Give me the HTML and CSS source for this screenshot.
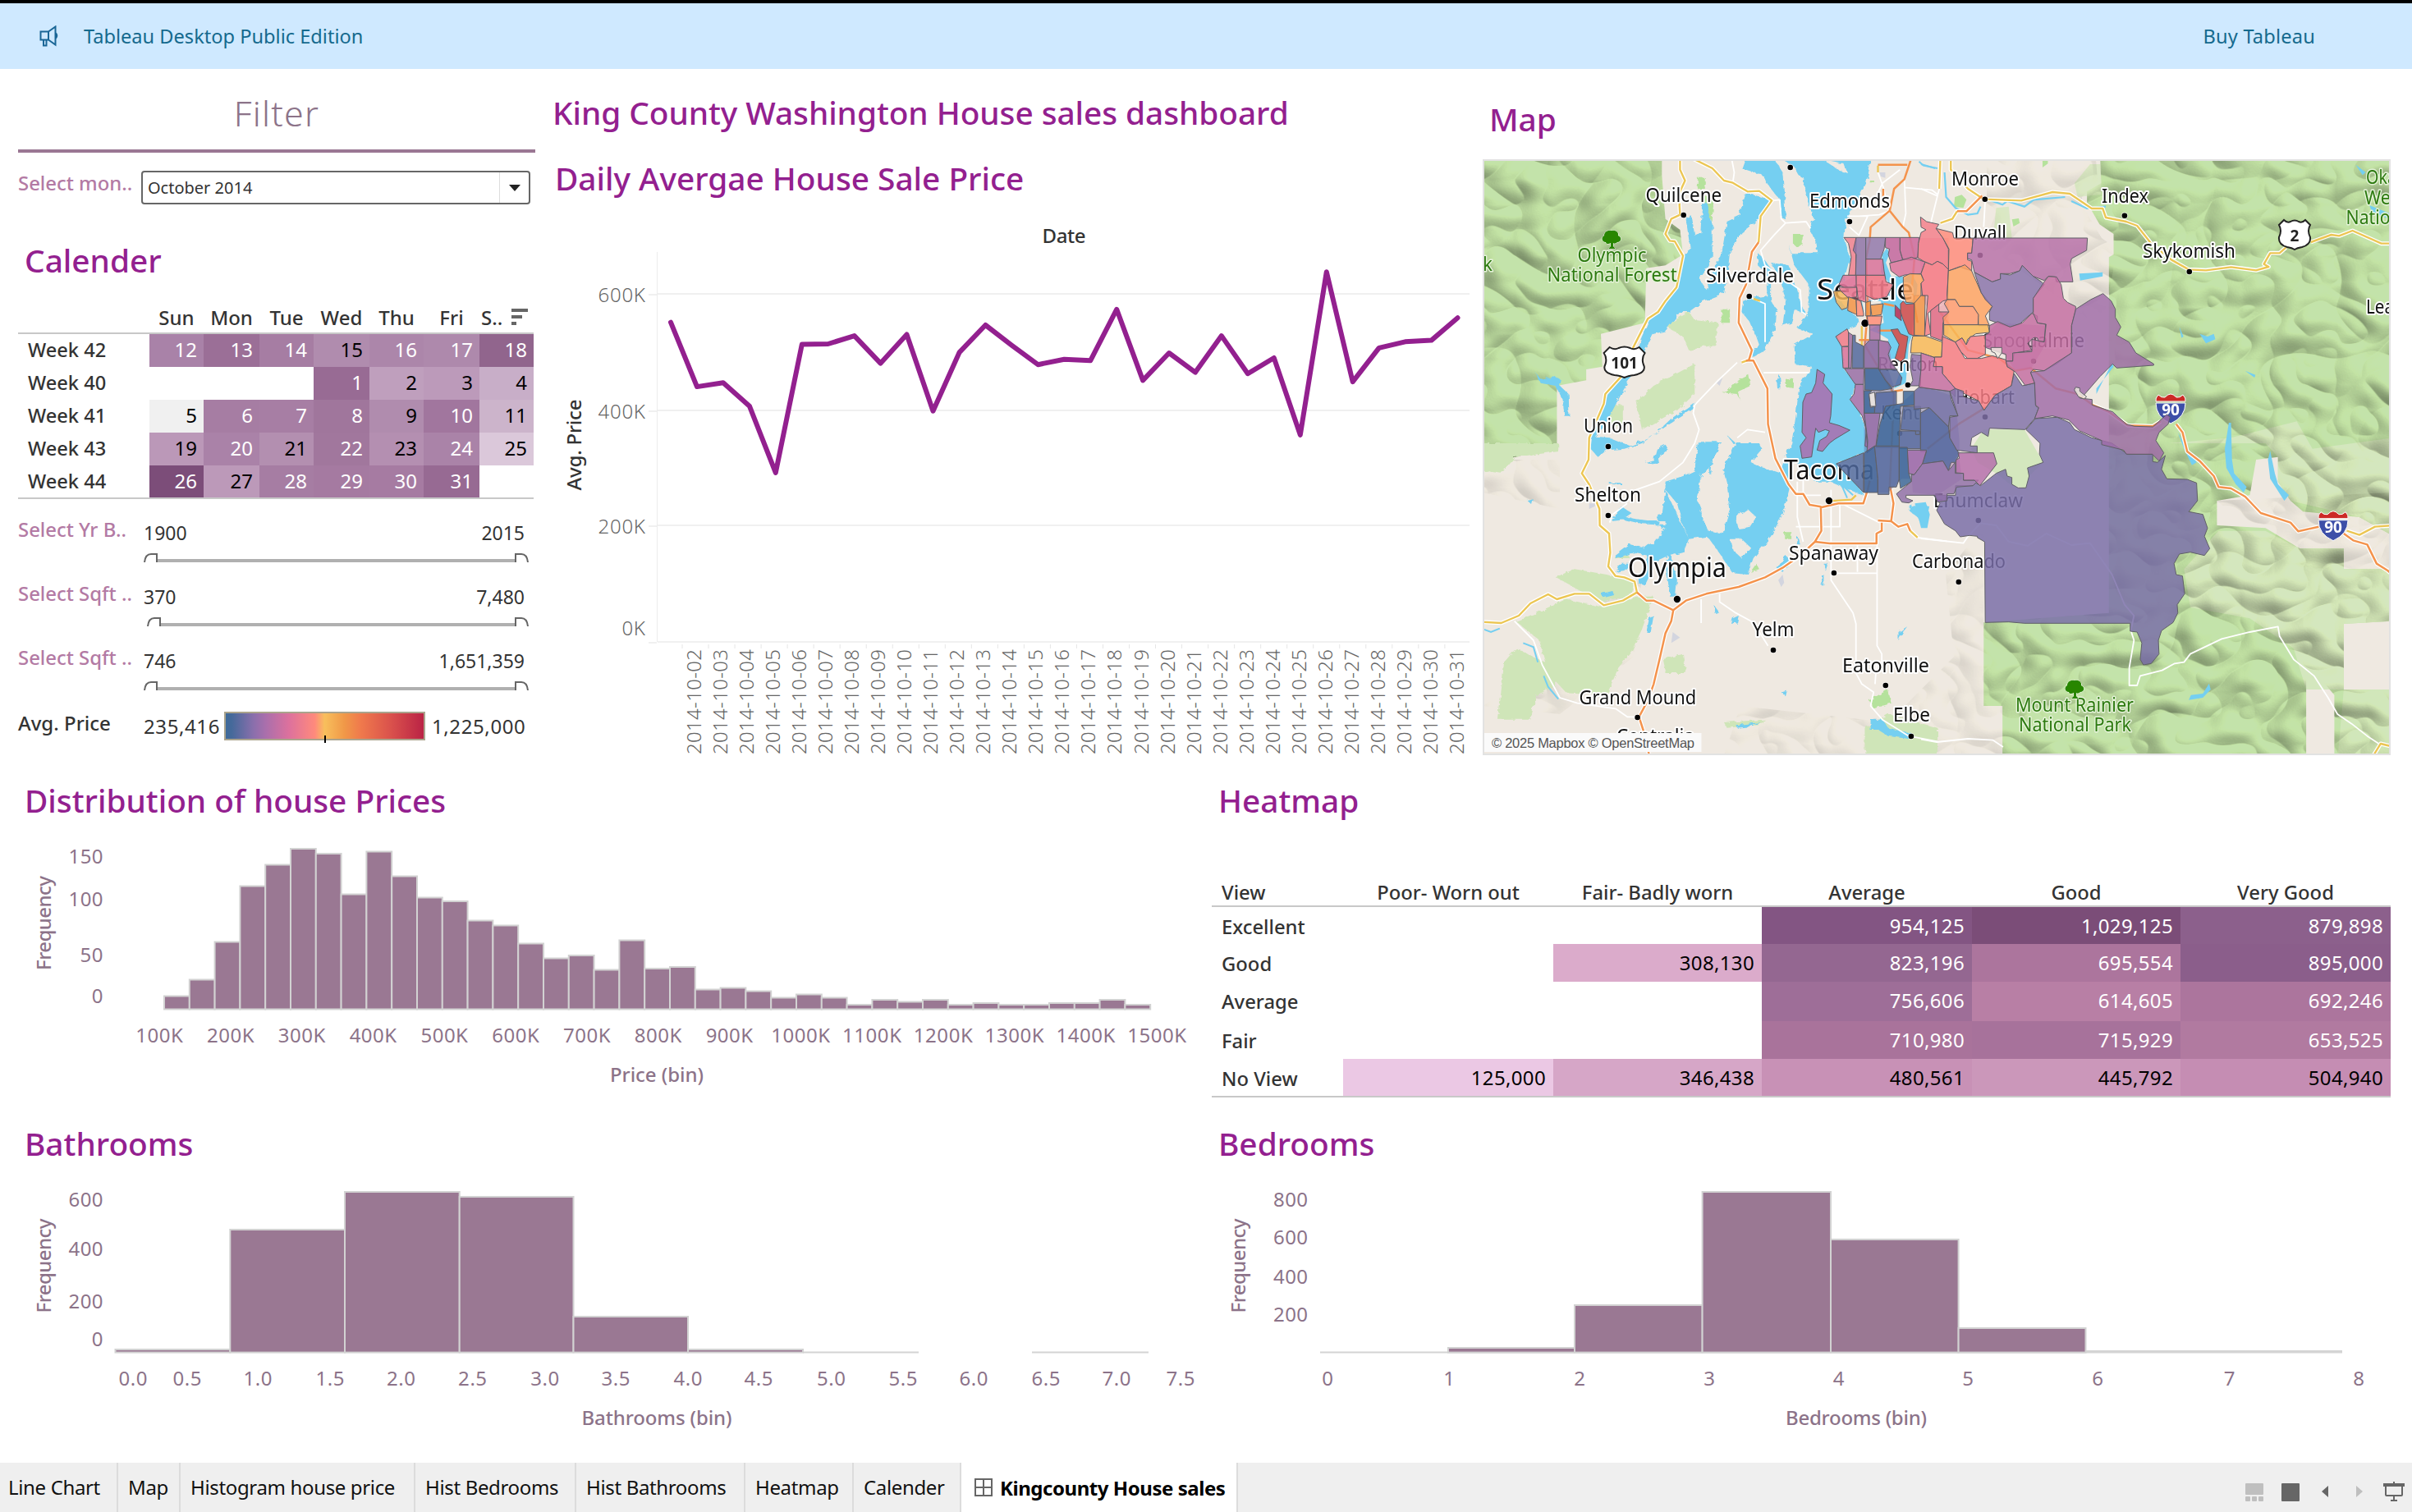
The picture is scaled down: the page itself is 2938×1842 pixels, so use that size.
FILE: index.html
```html
<!DOCTYPE html>
<html lang="en">
<head>
<meta charset="utf-8">
<title>King County Washington House sales dashboard</title>
<link rel="stylesheet" href="styles.css">
</head>
<body>
<header class="banner">
  <svg class="banner-icon" viewBox="0 0 26 26" width="26" height="26"><path d="M2.500 7.500H12V17.500H2.500ZM12 7.500L20.500 1.500V23.500L12 17.500M6 17.500V24.500H9.500V17.500M21 9.500Q23.500 12.500 21 15.500"/></svg>
  <span>Tableau Desktop Public Edition</span>
  <a class="buy">Buy Tableau</a>
</header>

<main class="dashboard">
  <div class="row row-top">
    <aside class="filters">
      <div class="filter-title">Filter</div>
      <div class="month">
        <label>Select mon..</label>
        <div class="select"><span>October 2014</span><i><svg width="14" height="8" viewBox="0 0 14 8"><path d="M0 0H14L7 8Z" fill="#222"/></svg></i></div>
      </div>
      <h2 class="cal-title">Calender</h2>
      <div class="calendar">
        <div class="cal-head"><span></span><span>Sun</span><span>Mon</span><span>Tue</span><span>Wed</span><span>Thu</span><span>Fri</span><span class="sat">S..<svg width="20" height="20" viewBox="0 0 20 20"><path d="M0 0H20V4H0ZM0 8H13V12H0ZM0 16H6V20H0Z" fill="#666"/></svg></span></div>
        <div class="cal-body" id="cal"></div>
      </div>
      <div class="slider">
        <label>Select Yr B..</label>
        <div><p><span>1900</span><span>2015</span></p>
        <svg width="476" height="11"><path d="M17 9H452" stroke="#b0b0b0" stroke-width="4"/><path d="M1 11Q2 1 9 1H16V11M453 11V1H460Q467 1 468 11"/></svg></div>
      </div>
      <div class="slider">
        <label>Select Sqft ..</label>
        <div><p><span>370</span><span>7,480</span></p>
        <svg width="476" height="11"><path d="M21 9H452" stroke="#b0b0b0" stroke-width="4"/><path d="M5 11Q6 1 13 1H20V11M453 11V1H460Q467 1 468 11"/></svg></div>
      </div>
      <div class="slider">
        <label>Select Sqft ..</label>
        <div><p><span>746</span><span>1,651,359</span></p>
        <svg width="476" height="11"><path d="M17 9H452" stroke="#b0b0b0" stroke-width="4"/><path d="M1 11Q2 1 9 1H16V11M453 11V1H460Q467 1 468 11"/></svg></div>
      </div>
      <div class="legend">
        <label>Avg. Price</label><span class="lo">235,416</span><div class="ramp"><i></i></div><span>1,225,000</span>
      </div>
    </aside>

    <section class="line-panel">
      <h1>King County Washington House sales dashboard</h1>
      <h2>Daily Avergae House Sale Price</h2>
      <svg id="line" width="1144" height="686" viewBox="660 244 1144 686"></svg>
    </section>

    <section class="map-panel">
      <h2>Map</h2>
      <svg class="map" width="1106" height="726" viewBox="1806 194 1106 726">
        <defs>
          <filter id="coast" x="-5%" y="-5%" width="110%" height="110%"><feTurbulence type="fractalNoise" baseFrequency=".05" numOctaves="3" seed="4"/><feDisplacementMap in="SourceGraphic" scale="16"/></filter>
          <filter id="relief" color-interpolation-filters="sRGB" filterUnits="userSpaceOnUse" x="1806" y="194" width="1106" height="726"><feTurbulence type="turbulence" baseFrequency=".013 .016" numOctaves="2" seed="11"/><feDiffuseLighting surfaceScale="11" diffuseConstant="1.130" lighting-color="#fffff0"><feDistantLight azimuth="305" elevation="60"/></feDiffuseLighting><feComposite in2="SourceGraphic" operator="in"/></filter>
          <g id="w-forest" transform="translate(1800 180) scale(.35714 .33333)">
            <path d="M0 30H628V100L640 260 690 300 700 390 640 430 575 440 570 640 420 680 425 800 370 810V850L270 870V1110H200L130 1130 20 1140H0Z"/>
          </g>
          <g id="e-forest" transform="translate(2340 180) scale(.38138 .33333)">
            <path d="M572 30H1510V1420L1400 1350 1220 1330 1180 1290 1140 1220V1130L1070 1140 1050 1270 945 1290V1380L1100 1390 1210 1465H1350V1540H1510V1730L1350 1740V1980H1510V2240H1320V2000L1290 1960 1230 1900 1230 2190V2240H260V2040H200V1735L600 1700V400L615 390V315L570 280 530 200 530 160 575 130Z"/>
          </g>
        </defs>
        <rect x="1806" y="194" width="1106" height="726" fill="#efe9e1"/>
        <g fill="#c3e3aa"><use href="#w-forest"/><use href="#e-forest"/></g>
        <g transform="translate(2340 180) scale(.38138 .33333)" fill="#d4e7be">
          <path d="M790 1080H1100L1140 1130V1220L1180 1290 1400 1350 1510 1420V1060L1250 1100 1200 1000 990 1060ZM840 1540 950 1400 1100 1400 1210 1465H1350V1540H1510V1730L1350 1740V1980H1230L1190 1830 1050 1720 860 1680ZM330 1030 200 1030 160 1100 180 1150 240 1190 290 1235 335 1243 345 1200 390 1150Z"/>
          <path d="M1350 1980H1510V2240H1330ZM490 130 540 60 575 60V170L500 180ZM240 220 280 215 290 330 230 330Z" opacity=".8"/>
        </g>
        <g class="shade"><use href="#w-forest" filter="url(#relief)"/><use href="#e-forest" filter="url(#relief)"/></g>
        <g class="shade soft"><path filter="url(#relief)" d="M2420 194 2553 194 2555 220 2536 240 2536 250 2560 290 2574 300V330L2560 400 2420 300ZM2120 860 2300 880 2380 800 2370 700 2416 640 2416 758V860H2439V920H2100ZM1806 560 1900 560 1900 620 1806 600ZM2700 610 2912 600V700L2800 690ZM1806 860 1900 800 1960 720 2000 700 1990 800 1900 870Z"/></g>
        <g transform="translate(1800 180) scale(.35714 .33333)">
          <g fill="#cfe5b8" filter="url(#coast)">
            <path d="M200 1700 300 1650 430 1680 540 1640H600L560 1760 520 1850 480 1900 440 2000 300 1990 240 1920 210 1800 130 1730ZM90 1880 130 1830 190 1860 290 1910 260 1970 200 2000 180 2090H70ZM265 1570 330 1540 440 1560 540 1590 520 1640 430 1660 350 1620ZM600 870 740 790V900L680 960 560 1030 540 930ZM640 650 720 600 740 630 820 640 810 720 720 740 700 690ZM450 940H495V1020H450ZM630 1870 700 1850 710 1920 640 1920ZM465 1500 500 1470 520 1500ZM0 1080H275V1110L130 1130 80 1190 20 1180ZM1320 2120 1400 2070 1568 2120V2230H1320ZM840 2100 980 2090 960 2110 850 2120Z"/>
            <path fill="#b5e29c" d="M1075 315H1108V350L1090 365 1075 350ZM830 590H860V640H830ZM1050 845H1078V875H1050ZM850 890 890 850 925 830 930 870 890 890 895 920 885 900 835 895ZM1340 120H1355V130H1340ZM1335 2020 1400 1980 1410 2030 1350 2050ZM1045 1405H1070V1430H1045ZM930 1550 950 1520 960 1540ZM750 110H775V150H750ZM765 170 805 180 800 270 780 240Z"/>
          </g>
          <g fill="#d3d5df"><path d="M1025 1580 1040 1560 1045 1590 1035 1605ZM665 1770 690 1790 660 1810ZM1370 90H1390V110L1375 105ZM380 1300H400V1310L380 1320ZM815 860 835 840 825 870Z"/></g>
          <g fill="#74cff1" filter="url(#coast)">
            <path d="M1010 30H1345L1325 130 1300 180 1270 240 1255 260 1250 330 1270 400 1255 460 1235 500 1215 530 1260 590 1295 620 1300 650 1260 665 1225 690 1245 730 1250 810 1285 860 1280 900 1268 920 1300 960 1330 1060V1110L1225 1155 1250 1180 1320 1270 1290 1260 1200 1220 1150 1220 1110 1170 1085 1150 1065 1160 1062 1250 1040 1340 1000 1420 940 1500 920 1560 870 1555 830 1490 790 1430 745 1390 790 1400 840 1410 845 1370 860 1320 850 1230 838 1180 880 1080 850 1050 870 1080H960L970 1100 930 1150 950 1160 1030 1190 1055 1110 1070 1080 1085 980 1095 880 1140 800 1082 790 1080 720 1145 680 1090 660 1130 600V500L1080 430 1060 350 1070 385H1160L1155 350 1130 290 1145 260 1110 130 1080 70 1040 45Z"/>
            <path d="M915 30 1010 40 1040 90 1050 262 1035 255 1030 190 1000 150 970 100 900 75ZM915 165 1000 190 960 260 900 310 860 380 850 480 840 530 770 560 720 600 690 600 640 670 600 680 570 740 520 840 470 940 430 1020 400 1055 450 1060 520 1090 590 1060 660 990 740 930 735 955 640 1020 560 1080 500 1100 440 1105 410 1130 385 1100 390 1050 410 980 440 900 500 830 540 740 580 640 640 560 680 500 700 390 725 370 710 260 730 250 740 320 760 310 765 200 780 200 800 280 800 400 770 460 755 480 780 520 810 430 830 400 850 270 890 250Z"/>
            <path d="M955 385 970 400 1000 440 1000 560 1020 590 1015 660 980 740 940 765 930 745 960 720 950 690 930 640 900 600 905 560 930 550 990 540 985 460 955 430ZM1000 420 1060 430 1075 480 1100 560 1120 610 1080 590 1070 640 1040 650 1050 560 1030 470ZM195 820 215 845 260 835 285 850 280 870 310 900 312 980 295 980 290 920 265 870 215 860ZM1030 830 1035 880 1022 880 1020 850Z"/>
            <path d="M750 1075H830L800 1150 790 1250 760 1330 790 1420 720 1430 700 1380 680 1300 640 1250V1220L700 1200 740 1180ZM640 1250 630 1330 610 1350 630 1400 560 1460 520 1450 470 1490 470 1500 530 1480 580 1490 545 1590 570 1600 610 1510 650 1490 640 1540 655 1640 675 1640 680 1580 660 1490 700 1480 720 1430ZM455 1365 490 1310 510 1325 525 1335 505 1350 580 1365 640 1365V1380L560 1375 500 1360ZM470 1550 490 1520 520 1520 500 1545ZM570 1150 600 1140 610 1100 640 1085 650 1100 620 1130 610 1155ZM1090 1420 1100 1450 1085 1450ZM1020 1540 1050 1490 1070 1510 1040 1550Z"/>
            <path d="M170 1290 190 1285 185 1305ZM420 1630 460 1620 465 1635 430 1645ZM585 1720 600 1710 590 1770 575 1770ZM805 1670 825 1700 810 1700ZM870 1720 890 1710 885 1735 865 1740ZM1170 1560H1180V1600H1172ZM1180 1520H1195L1190 1550ZM1035 1990 1055 1985 1050 2005ZM880 2110 965 2100 930 2115 885 2120ZM1435 1770 1465 1750 1450 1770 1435 1800ZM1475 1310 1500 1300 1540 1310 1530 1380 1515 1380 1500 1350 1475 1330ZM1340 2090 1380 2090 1400 2120 1480 2140 1470 2160 1400 2150 1370 2130 1340 2130ZM450 1225H490V1230H450Z"/>
          </g>
          <g fill="#74cff1"><path d="M1300 560 1318 600 1310 560 1330 550 1350 560 1480 460 1500 500 1480 690 1470 720 1460 860 1420 880 1440 820 1400 780 1400 700 1370 680 1335 665 1385 640 1375 560 1420 520 1375 455 1380 390 1395 367 1405 385 1392 420 1410 470 1450 470 1450 560Z"/></g>
          <g fill="#efe9e1" filter="url(#coast)"><path d="M880 1350 920 1320 950 1350 925 1390 890 1395ZM860 1430 900 1430 930 1460 900 1500 870 1470ZM750 1290 760 1200 790 1170 800 1240 820 1300 790 1370 770 1340ZM560 1440 600 1400 640 1390 600 1450ZM1180 45 1250 60 1260 90 1230 80ZM1040 95 1060 80 1110 110 1105 170 1060 200Z"/></g>
          <g fill="none" stroke="#74cff1" stroke-width="2"><path vector-effect="non-scaling-stroke" d="M1505 50 1520 65 1568 75M20 1760 45 1770 75 1757M155 1810 190 1825 205 1880M225 1930 240 1970 275 2015M460 1350 620 1370M1210 1200 1280 1270M1240 1230 1260 1280"/></g>
          <g class="casing"><path d="M690 30V80L707 120 690 160 688 210 690 245 660 260 640 315 655 340 672 342 700 395 678 510 640 560 615 600 580 625 530 730 490 835 435 900 430 935 380 1060 378 1140 355 1190 380 1230 415 1320 416 1380 448 1410 452 1480 445 1530 470 1565 500 1570 535 1585 543 1625 495 1655 430 1672 380 1630H330L270 1650 240 1632 180 1665 140 1710 80 1737 0 1732M725 35 800 75 840 120 870 128 920 160 960 158 1003 193 965 250 958 345 935 380 915 500 893 550 890 640 935 740 925 775 900 785M915 778H940L988 880 990 1010 1015 1135 1060 1230 1085 1265H1110L1132 1305 1170 1312 1172 1400 1150 1440 1100 1490 1040 1535 980 1570 890 1605 780 1630 710 1655 667 1690 600 1655H575L543 1625M667 1690 660 1730 640 1775 620 1870 600 1960 580 2020 550 2080 565 2130 587 2230M1170 1315 1230 1300H1315L1330 1250M1405 1230 1418 1300 1410 1365 1365 1362M1150 1440 1200 1446H1360V1410L1378 1400V1370M1410 1365 1435 1385 1465 1375 1475 1400 1500 1425"/></g>
          <g class="white"><path d="M865 35 875 90 870 128M1003 193 1030 190 1035 260 1050 275 1120 270 1135 295M1050 275 1010 320 965 375 980 430 1100 520 1105 600 1120 610M885 785 820 850 740 940 735 970 755 1030 740 1080 700 1150 620 1220 540 1250M975 822H1130M935 550 980 570V710M1205 1250V1580L1280 1700 1290 1740V1920L1310 1960 1350 1990 1340 2040 1380 2090 1470 2150 1568 2170M1362 1440V1820L1378 1850V1880L1360 1890 1355 1960M1220 1555H1362M1295 1450V1550M1500 1425 1600 1438M125 1730 190 1800 220 1890 280 2010 340 2030 470 2050 510 2080H545M825 1630V1660L880 1700 940 1735 990 1820M762 1650V1737M450 1370 460 1340 510 1300M1090 1220V1350L1110 1440M1085 1385H1235V1300M1250 1305 1370 1370M885 1060 920 1030 980 1040M1268 290 1300 320 1330 250H1260M1300 250 1370 245 1400 232M1365 90 1385 150 1400 230M1350 200 1380 130 1440 80M1455 110 1460 240 1450 290M1455 145 1550 155 1568 170M1085 1270H1170M1110 1190V1270"/></g>
          <g class="yellow"><path d="M690 30V80L707 120 690 160 688 210 690 245 660 260 640 315 655 340 672 342 700 395 678 510 640 560 615 600 580 625 530 730 490 835 435 900 430 935 380 1060 378 1140 355 1190 380 1230 415 1320 416 1380 448 1410 452 1480 445 1530 470 1565 500 1570 535 1585 543 1625 495 1655 430 1672 380 1630H330L270 1650 240 1632 180 1665 140 1710 80 1737 0 1732M725 35 800 75 840 120 870 128 920 160 960 158 1003 193 965 250 958 345M1200 1291 1275 1286 1290 1270M1475 1400 1500 1425M940 552 963 560M900 785 925 775M1310 650V725M1365 65V90"/></g>
          <g class="orange"><path d="M958 345 935 380 915 500 893 550 890 640 935 740 925 775M915 778H940L988 880 990 1010 1015 1135 1060 1230 1085 1265H1110L1132 1305 1170 1312 1172 1400 1150 1440 1100 1490 1040 1535 980 1570 890 1605 780 1630 710 1655 667 1690 600 1655H575L543 1625M667 1690 660 1730 640 1775 620 1870 600 1960 580 2020 550 2080 565 2130 587 2230M1170 1315 1230 1300H1315L1330 1250 1345 1180M1405 1230 1418 1300 1410 1365 1365 1362M1150 1440 1200 1446H1360V1410L1378 1400V1370M1410 1365 1435 1385 1465 1375 1475 1400M1480 35 1455 115 1420 150 1405 230 1340 290 1337 340 1325 400 1330 600 1320 720 1420 900 1405 1240M1405 230 1450 290 1470 310 1490 400 1480 520 1500 640M1365 62H1465M1300 703H1335M1385 570 1420 578M1365 668H1410M1383 150V190M1420 890 1450 885"/></g>
        </g>
        <g transform="translate(2340 180) scale(.38138 .33333)">
          <g fill="#74cff1"><path d="M505 460 580 455V470L508 485ZM983 1005H990L993 1140 1000 1190 1040 1240 1030 1260 1005 1230 975 1170 970 1100ZM1115 1108 1130 1190 1140 1230 1175 1270 1160 1290 1115 1210 1108 1140ZM820 1040 845 1090 880 1150 865 1160 840 1100ZM825 655 838 690 832 695ZM890 680 915 690 935 680 940 700 910 715ZM1035 815 1068 830 1065 840ZM920 1958 925 1980 900 2010 855 2018 862 2000 900 1995ZM1388 62 1420 90 1410 100ZM1432 210 1497 240V262L1440 235ZM560 900 610 785 615 800 560 880ZM-20 1300 15 1295 28 1340 20 1390 0 1390Z"/></g>
          <g fill="#b5e29c"><path d="M108 180 130 172 145 190 135 220 105 215ZM388 45H405V58L388 72ZM290 262 312 258 315 275 295 288Z"/></g>
          <g fill="none" stroke="#74cff1" stroke-width="2.200"><path vector-effect="non-scaling-stroke" d="M75 90 80 180 110 220 150 245 180 240 190 215M215 190 260 208 275 195 330 215 360 190 460 180M480 195 530 222 590 215M0 60 45 75M700 300 735 345"/></g>
          <g class="casing"><path d="M95 30V80L150 150 200 188 320 193 420 162 475 168 545 222H580L590 255 655 270 690 285 735 350 800 410 855 445 910 448 990 436 1070 448 1110 435 1095 425 1115 385H1145L1165 365M1245 345 1310 318 1335 322 1378 303 1470 350H1510M62 30 58 150M195 175 145 232H115L100 260 62 275M548 940 600 965 660 1015 740 1018 765 1000M815 1010 835 1040 850 1110 890 1145 935 1200 950 1240 990 1245 1035 1275 1085 1335 1180 1370 1205 1402 1270 1385M1350 1410 1380 1435 1425 1450 1455 1520 1490 1545 1510 1565M1360 1400 1400 1415 1450 1385 1510 1380M1510 2190 1468 2178 1440 2230"/></g>
          <g class="white"><path d="M670 1765 680 1800 665 1900V1965H690L700 1930 770 1910 810 1885 840 1880 860 1850 960 1795 1050 1770 1140 1750 1145 1785 1190 1870 1255 1930 1300 2010 1330 2070 1375 2105 1425 2150 1465 2180M0 2162 50 2172 150 2160 230 2165 262 2190M0 1428 135 1445 150 1420 190 1372 240 1380 280 1440 340 1455 400 1410 480 1452 540 1445 610 1560 650 1670 680 1710 670 1765M205 190 200 290M58 150 30 280M0 150 50 175"/></g>
          <g class="yellow"><path d="M95 30V80L150 150 200 188 320 193 420 162 475 168 545 222H580L590 255 655 270 690 285 735 350 800 410 855 445 910 448 990 436 1070 448 1110 435 1095 425 1115 385H1145L1165 365M1245 345 1310 318 1335 322 1378 303 1470 350H1510M62 30 58 150M115 232 100 260 62 275M1360 1400 1400 1415 1450 1385 1510 1380M1510 2190 1468 2178 1440 2230"/></g>
          <g class="orange"><path d="M195 175 145 232H115M60 600 150 740 250 770 300 815 350 805 430 880 500 900 548 940 600 965 660 1015 740 1018 765 1000M815 1010 835 1040 850 1110 890 1145 935 1200 950 1240 990 1245 1035 1275 1085 1335 1180 1370 1205 1402 1270 1385M1350 1410 1380 1435 1425 1450 1455 1520 1490 1545 1510 1565M20 1100 120 1010 205 950"/></g>
        </g>

        <g class="places" id="places"></g>
        <g class="shield" transform="translate(1978.600 441)"><path d="M-18-18Q-12-14-7-17 0-20 7-17 12-14 18-18L25-11Q20-4 24 5 26 13 12 16 4 17 0 19-4 17-12 16-26 13-24 5-20-4-25-11Z"/><text y="8">101</text></g>
        <g class="shield" transform="translate(2795 286)"><path d="M-13-18Q-9-14-5-16 0-19 5-16 9-14 13-18L19-12Q15-5 19 3 20 12 9 15 3 16 0 18-3 16-9 15-20 12-19 3-15-5-19-12Z"/><text y="8">2</text></g>
        <g class="interstate" transform="translate(2644 498)"><path class="b" d="M-18-7H18Q18 10 0 18-18 10-18-7Z"/><path class="r" d="M-18-9Q-19-13-15-17-11-13-7-14-3-18 0-18 3-18 7-14 11-13 15-17 19-13 18-9Z"/><text y="8">90</text></g>
        <g class="interstate" transform="translate(2842 640.700)"><path class="b" d="M-18-7H18Q18 10 0 18-18 10-18-7Z"/><path class="r" d="M-18-9Q-19-13-15-17-11-13-7-14-3-18 0-18 3-18 7-14 11-13 15-17 19-13 18-9Z"/><text y="8">90</text></g>
        <g class="tree"><path id="tree" d="M1963 281C1968 280 1972 283 1971 287 1976 289 1975 295 1970 295 1968 297 1966 297 1965 296V300L1968 303H1959L1962 300V296C1959 298 1956 297 1956 295 1951 295 1950 289 1954 287 1954 283 1958 280 1963 281Z"/><use href="#tree" x="564" y="548"/></g>

        <g class="zips" transform="translate(2340 180) scale(.38138 .33333)">
          <path fill="#796ea8" d="M335 1030 365 990 435 985 475 1005 490 1030 545 1060 610 1080 660 1120H740V1147L755 1150 780 1125 768 1175 785 1210 850 1212 880 1225 883 1290 855 1330 900 1340 915 1390 905 1420 922 1465 905 1490 860 1478 825 1485 808 1520 815 1560 835 1565 842 1630 818 1670 820 1700 805 1735 768 1765 758 1800 760 1850 735 1885 710 1890 700 1870 705 1810 690 1770 668 1767V1738H330L280 1733 205 1735 203 1440 180 1425V1420L155 1417 125 1422 110 1400 75 1375 50 1325 60 1300 40 1270H110V1235H165L175 1225 190 1235 240 1190 270 1175 275 1200 290 1205V1230L310 1243H335L345 1200 340 1170 390 1150 378 1120 380 1080Z"/>
        </g>
        <g class="under" transform="translate(2200 250) scale(.33333)">
          <path fill="#6a6ca4" d="M212 600H300L320 660 325 730H340L420 660 545 700 560 860 560 900 540 940 520 1000 350 1000 300 1050 212 1050Z"/>
          <path fill="#a26daa" d="M212 495H300L310 560 330 600H212ZM420 940 560 930 570 1000 480 1060 390 1050 385 990Z"/>
          <path fill="#ea7a90" d="M120 290 183 256H288L300 330 220 350 185 350 150 320ZM410 120H520V350L450 390 420 330V240ZM455 390 520 350V470L498 495 455 480Z"/>
          <path fill="#c46ea2" d="M290 118H413V200L340 200 310 210ZM655 475 700 430 870 440 880 500 820 600 760 600 730 550 655 520Z"/>
        </g>
        <g class="zips" transform="translate(2200 250) scale(.33333)">
          <path fill="#ee7f8f" d="M138 118H183L181 256H155L165 190 155 140Z"/>
          <path fill="#8d72a7" d="M183 118H218V256H181L183 180 172 165Z"/>
          <path fill="#9077ac" d="M218 118H290L285 160 272 197H218Z"/>
          <path fill="#c56fa2" d="M290 118H343V165L353 200 310 210 300 180 305 160 290 155Z"/>
          <path fill="#cf71a0" d="M343 118H413L408 190 385 200 353 198 343 165Z"/>
          <path fill="#f3808b" d="M418 43 440 60 485 70 475 85 500 120 520 160V235L500 215 480 205 460 218 430 205 408 192 410 140 420 100 438 90 420 80Z"/>
          <path fill="#d8709a" d="M218 197H280L285 240 288 256H218Z"/>
          <path fill="#da719b" d="M305 212 353 200 385 190 435 208 420 250 360 255 340 262 310 240Z"/>
          <path fill="#de769c" d="M135 256H183L185 300 145 305 120 290Z"/>
          <path fill="#e87a94" d="M183 256H218V355L190 345 185 300H183ZM120 300H185V335L155 340 125 312Z"/>
          <path fill="#f07a88" d="M218 256H288L292 280 318 290 295 335 250 345 218 330Z"/>
          <path fill="#f6b75d" d="M100 315 125 312 155 340 150 375 130 382 110 355Z"/>
          <path fill="#f29345" d="M155 335 183 345 185 400 152 385ZM218 355 235 350V405H218ZM235 365 282 360 275 400 240 405ZM395 330H435L433 478 395 475Z"/>
          <path fill="#ff8b77" d="M183 345 200 350 210 395V405H185ZM222 405H277L272 438H228Z"/>
          <path fill="#a86ca4" d="M232 438H270V493H232Z"/>
          <path fill="#c62b50" d="M325 365 345 385 348 422 325 405Z"/>
          <path fill="#e24c45" d="M345 360 355 350 365 362 395 360V478L375 470 355 420 345 390Z"/>
          <path fill="#fda45f" d="M355 262 380 250 420 252 430 275 420 285V330L395 358 365 355 355 320Z"/>
          <path fill="#f57f88" d="M435 208 460 218 480 205 500 215 520 235 515 330 520 345 500 350 445 395 455 470 433 478 445 330H425L420 285 430 275 420 250Z"/>
          <path fill="#e0718a" d="M455 385 485 362V390H522L500 430 498 495 455 480Z"/>
          <path fill="#ff8c7c" d="M475 85 535 100 540 120H610L605 175H590V200L605 205V240L560 225 520 240 522 160 500 120Z"/>
          <path fill="#fea363" d="M520 240 550 230 580 218 605 240 640 320 680 370 655 405 670 440H630L628 400 610 370H560L545 345H515Z"/>
          <path fill="#ff9b6f" d="M515 345H545L560 370H610L630 400 628 437H503L500 410 522 390 505 360Z"/>
          <path fill="#f8b957" d="M503 437H665L670 465 620 470 590 490 585 510 570 485 545 500 503 475ZM390 478H435L498 500 495 555H465L420 540H382L385 500Z"/>
          <path fill="#de483f" d="M310 455 335 452 345 470 372 480 360 560 345 572 325 560 340 510Z"/>
          <path fill="#f57f88" d="M545 500 570 485 585 510 600 480 655 475V545L625 560H590L560 530Z"/>
          <path fill="#f77c83" d="M498 480 545 500 580 560H640L680 550 730 565 735 590 760 605 750 660 690 695 650 750 630 715 580 690 545 670 498 615V590H465L470 555H495Z"/>
          <path fill="#ef7a88" d="M108 480 150 452 155 465V515L130 517Z"/>
          <path fill="#d8709a" d="M130 517H155V595H135Z"/>
          <path fill="#9e6ba2" d="M155 465 170 475 165 595H155Z"/>
          <path fill="#50669c" d="M170 475H180V500L210 515V595H168Z"/>
          <path fill="#896ba2" d="M212 515 232 493H265V595H212Z"/>
          <path fill="#a06ca5" d="M265 493 300 500 310 520 300 545 310 575 330 600H265Z"/>
          <path fill="#3d6799" d="M215 597H265L290 640 315 670 270 678 215 675Z"/>
          <path fill="#596a9e" d="M265 600H330L350 630 345 655 315 665 290 640Z"/>
          <path fill="#966da6" d="M140 597H212L210 655H180Z"/>
          <path fill="#a26daa" d="M180 655H210L212 760 225 885 215 880 220 820 205 770 160 710 175 690Z"/>
          <path fill="#966da6" d="M212 760H270L255 880 222 905 225 860Z"/>
          <path fill="#3c6698" d="M212 678H240L230 690 235 740 250 735V760H212Z"/>
          <path fill="#52689e" d="M255 685 330 680V730L290 735 285 760H250Z"/>
          <path fill="#3c6698" d="M330 728 355 725V680L395 680V730L345 735 340 885H255L270 800 290 735Z"/>
          <path fill="#596c9f" d="M355 735H418V890H340V825H415V838H400V825L345 820Z"/>
          <path fill="#7773a6" d="M395 680 412 665 525 680 530 710 555 770H525L520 810 480 770 450 740 395 745Z"/>
          <path fill="#52679d" d="M418 760 450 740 480 770 520 810 525 850 560 910 545 940H530L520 970 500 935 425 945 440 900H418Z"/>
          <path fill="#8f70a8" d="M385 545 420 548 418 660H380L390 640 380 590Z"/>
          <path fill="#c56da1" d="M420 540 465 555 470 560 465 590H498V615L545 670V700L525 680 412 665 420 600Z"/>
          <path fill="#8272a9" d="M525 680 545 670 575 680V700L630 715 650 750 690 695 750 660 760 615 790 660 835 650 840 735 850 740 835 780 800 820 670 815 665 845 640 830 605 850 600 880H625V905L550 895 525 850 525 810 525 775 555 770Z"/>
          <path fill="#50699d" d="M110 945 210 905V1050Z"/>
          <path fill="#3f6497" d="M212 905 250 880 262 1000V1050H212Z"/>
          <path fill="#566b9f" d="M250 880H340V1000L330 1030H303V1057H262V1000Z"/>
          <path fill="#3c6698" d="M340 885H370L375 980 385 1010 345 1035 340 1000Z"/>
          <path fill="#a26daa" d="M370 895H440L425 945 395 985 375 980Z"/>
          <path fill="#9070a8" d="M425 945 500 935 520 970 545 940V980H575V1005H630L610 1025 550 1030 540 1055H515V1080L480 1085 470 1060H365V1070L390 1080 375 1088 350 1085 330 1055 385 1010V985H395Z"/>
          <path fill="#b56fac" d="M555 905H685L697 945 635 1025 615 1005H575V980L548 978V930L560 925Z"/>
          <path fill="#ab6cab" d="M40 600 68 618 62 650 95 690 90 770 85 795 120 805 160 822 105 855 85 870 60 900 40 895 50 860 75 845 85 825 70 820 45 830 35 815 20 920-15 925-22 880 0 850-15 830-12 720 0 690 20 685 35 650Z"/>
          <path fill="#b771a9" d="M610 120H1028L1025 165 970 195 965 215 975 280H915L910 262 885 260 870 275 830 260 790 220 780 240 745 250 710 250V270L680 280 615 245 605 200 590 195V175H605Z"/>
          <path fill="#8974ab" d="M615 245 680 280 710 270V250L745 255 780 240 790 220 830 260 860 280 870 290 830 340V390L790 425 780 435 745 445 700 430 670 420V390L680 370 655 345 640 320Z"/>
          <path fill="#c46ea2" d="M670 440 700 425 745 445 790 430 825 395 845 405V430L875 435 870 500H850L845 485H830L810 505 825 530 760 540 755 570H730V545L655 520V475L670 465Z"/>
          <path fill="#c46ea2" d="M870 280 885 260 915 262 932 290 940 340 955 355 985 370V385L970 440V540L915 580 870 605 830 600 820 612 835 650 800 658 765 610 735 590 730 570H755V540L825 535V490L870 500 877 435 845 430 830 395V340Z"/>
          <path fill="#a06ca8" d="M985 380 1040 345 1085 323 1115 350 1130 380V410L1150 445 1135 475 1180 500 1205 540 1270 580V585L1135 595 1120 580 1075 625 1010 700 985 670 1000 705 1045 710 1045 730 1120 755 1170 800 1200 808 1267 810 1318 765 1330 775 1323 800 1290 830 1278 860 1307 905 1290 935 1265 910H1170L1160 895 1080 875V860L1000 825 960 785 900 770 835 780 850 740 838 730 835 650 820 610 870 605 915 575 970 540V440Z"/>
          <path fill="#efe9e1" d="M675 520H715V540L700 560 690 540 678 535ZM985 665 1000 668V680L1025 700 1015 708 995 700 980 675ZM230 690 250 683 255 735 235 735Z"/>
        </g>
        <rect x="1806.500" y="893" width="266" height="23" fill="#fafafa"/>
        <text class="attrib" x="1817" y="911" textLength="247">© 2025 Mapbox © OpenStreetMap</text>
        <rect x="1807" y="195" width="1104" height="724" fill="none" stroke="#e2e2e2" stroke-width="2"/>
      </svg>
    </section>
  </div>

  <div class="row row-mid">
    <section class="half">
      <h2>Distribution of house Prices</h2>
      <svg id="price" width="1470" height="340" viewBox="0 1020 1470 340"></svg>
    </section>
    <section class="half heat-panel">
      <h2>Heatmap</h2>
      <div class="heat" id="heat"></div>
    </section>
  </div>

  <div class="row row-low">
    <section class="half">
      <h2>Bathrooms</h2>
      <svg id="bath" width="1470" height="356" viewBox="0 1426 1470 356"></svg>
    </section>
    <section class="half">
      <h2>Bedrooms</h2>
      <svg id="bed" width="1468" height="356" viewBox="1470 1426 1468 356"></svg>
    </section>
  </div>
</main>

<footer class="tabs">
  <a style="width:144px;padding-left:10px">Line Chart</a>
  <a style="width:76px">Map</a>
  <a style="width:286px">Histogram house price</a>
  <a style="width:196px">Hist Bedrooms</a>
  <a style="width:206px">Hist Bathrooms</a>
  <a style="width:132px">Heatmap</a>
  <a style="width:131px">Calender</a>
  <a class="active" style="width:337px"><svg width="24" height="24" viewBox="0 0 24 24"><path d="M2 2H22V22H2ZM12 2V22M2 12H22" fill="none" stroke="#666" stroke-width="2"/></svg>Kingcounty House sales</a>
  <svg class="tools" width="208" height="60" viewBox="2730 1782 208 60">
    <g fill="#bfbfbf"><rect x="2735" y="1807" width="22" height="14" rx="1"/><rect x="2735" y="1823" width="6" height="6" rx="1"/><rect x="2743" y="1823" width="6" height="6" rx="1"/><rect x="2751" y="1823" width="6" height="6" rx="1"/><path d="M2870 1810 2878 1817 2870 1824Z"/></g>
    <g fill="#666"><rect x="2779" y="1807" width="22" height="22" rx="1"/><path d="M2836 1810 2828 1817 2836 1824ZM2903 1807H2915V1805H2917V1807H2929V1811H2903ZM2912 1827H2920V1829H2912ZM2915 1822H2917V1828H2915Z"/></g>
    <rect x="2906" y="1810" width="20" height="12" rx="1" fill="none" stroke="#666" stroke-width="2"/>
  </svg>
</footer>
<script src="charts.js"></script>
</body>
</html>
```
FILE: styles.css
```css
* { box-sizing: border-box; }
body {
  margin: 0; width: 2938px; height: 1842px; overflow: hidden;
  display: flex; flex-direction: column;
  background: #fff; color: #333;
  font-family: "Noto Sans", sans-serif; font-size: 24px;
}
svg { display: block; }
h1, h2, p { margin: 0; }
h1, h2 { font-size: 38.8px; font-weight: 540; color: #93208f; white-space: nowrap; }

.banner {
  height: 84px; border-top: 4px solid #000; background: #cfe9ff; color: #156a8e;
  display: flex; align-items: center; padding: 0 118px 0 47px; font-size: 23.6px; line-height: 80px;
}
.banner-icon { fill: none; stroke: #1a6696; stroke-width: 2; margin-right: 29px; }
.buy { margin-left: auto; letter-spacing: .2px; }

.dashboard { height: 1698px; display: flex; flex-direction: column; }
.row { display: flex; }
.row-top { height: 846px; }
.row-mid { height: 430px; }
.row-low { height: 422px; }
.half { width: 1470px; }
.half h2 { padding-left: 30px; }
.half + .half h2 { padding-left: 14px; }
.row-mid h2 { height: 90px; line-height: 90px; }
.row-low h2 { height: 66px; line-height: 66px; }

.filters { width: 660px; padding: 0 8px 0 22px; }
.filter-title {
  height: 102px; line-height: 107px; border-bottom: 4px solid #9a7793; text-align: center;
  font-size: 43px; font-weight: 300; letter-spacing: 1.2px; color: #8c7389;
}
.month { height: 76px; display: flex; }
.month label, .slider label { width: 153px; line-height: 74px; color: #b37aa4; font-weight: 500; white-space: nowrap; font-size: 23.9px; }
.month label { width: 150px; }
.select {
  width: 474px; height: 41px; margin-top: 22px; border: 2px solid #666; border-radius: 4px;
  display: flex; font-size: 20px; line-height: 38px; padding-left: 6px;
}
.select i { margin-left: auto; width: 36px; border-left: 1px solid #ddd; padding: 15px 0 0 11px; }

.cal-title { height: 110px; line-height: 110px; padding-left: 8px; }
.calendar { height: 236px; width: 628px; }
.cal-head, .cal-row { display: grid; grid-template-columns: 160px 66px 68px 66px 68px 66px 68px 66px; }
.cal-head { height: 33px; line-height: 29px; text-align: center; font-weight: 500; font-size: 24px; }
.cal-head .sat { text-align: left; padding-left: 2px; display: flex; gap: 11px; }
.cal-head svg { margin-top: 4px; }
.cal-body { border-top: 2px solid #c8c8c8; border-bottom: 2px solid #c8c8c8; height: 203px; }
.cal-row { height: 40px; line-height: 38px; }
.cal-row:last-child { height: 39px; }
.cal-row span { text-align: right; padding-right: 8px; font-weight: 370; }
.cal-row span:first-child { text-align: left; padding-left: 12px; font-weight: 530; font-size: 23.6px; }
.w { color: #fff; }
.k { color: #000; }

.slider { height: 78px; display: flex; }
.slider p { height: 66px; line-height: 83px; width: 464px; display: flex; justify-content: space-between; font-size: 23px; }
.slider svg { fill: none; stroke: #666; stroke-width: 2; }
.legend { display: flex; height: 88px; line-height: 85px; font-size: 24px; letter-spacing: .6px; }
.legend label { width: 153px; line-height: 77px; font-weight: 500; letter-spacing: 0; }
.legend .lo { width: 98px; }
.ramp {
  width: 245px; height: 35px; margin: 25px 8px 0 0; border: 2px solid #aaa38c; position: relative;
  background: linear-gradient(90deg, #3f6a98 0, #45699a 3%, #8a6fac 14%, #a96fac 20%, #dd719d 32%, #ff8a7c 45%, #f8bf5c 50%, #f09848 60%, #f07a4c 68%, #d9504c 84%, #ba2345 100%);
}
.ramp i { position: absolute; left: 120px; bottom: -5px; width: 2px; height: 9px; background: #000; }

.line-panel { width: 1144px; }
.line-panel h1 { height: 106px; line-height: 106px; padding-left: 13px; letter-spacing: -.05px; }
.line-panel h2 { height: 54px; line-height: 54px; padding-left: 16px; }
.map-panel { width: 1134px; padding-left: 2px; }
.map-panel h2 { height: 110px; line-height: 122px; padding-left: 8px; }

.axis { fill: #666; font-size: 24px; font-weight: 360; }
.axis-dark { fill: #333; font-size: 24px; font-weight: 500; }
.tick { fill: #8c7389; font-size: 24px; font-weight: 370; }
.name { fill: #8c7389; font-size: 24px; font-weight: 500; }

.map text { font-family: "Noto Sans", sans-serif; }
.shade { mix-blend-mode: multiply; opacity: .6; }
.shade.soft { opacity: .22; }
.casing, .white, .yellow, .orange { fill: none; stroke-linejoin: round; }
.casing path, .white path, .yellow path, .orange path { vector-effect: non-scaling-stroke; }
.casing { stroke: #fff; stroke-width: 5px; }
.white { stroke: #fff; stroke-width: 1.8px; }
.yellow { stroke: #ecc653; stroke-width: 2.4px; }
.orange { stroke: #f4934c; stroke-width: 2.5px; }
.places text { fill: #111; stroke: #fff; stroke-width: 4px; paint-order: stroke; stroke-linejoin: round; }
.places .park { fill: #2d7a10; stroke: #e4f2d8; stroke-width: 3px; }
.places circle { stroke: #fff; stroke-width: 2px; stroke-opacity: .6; paint-order: stroke; }
.shield path { fill: #fff; stroke: #222; stroke-width: 2; }
.shield text, .interstate text { font-size: 19px; font-weight: 700; text-anchor: middle; fill: #222; }
.interstate text { fill: #fff; }
.b { fill: #3d4fa8; stroke: #fff; stroke-width: 1; }
.r { fill: #cc2a26; stroke: #fff; stroke-width: 1; }
.tree { fill: #288600; stroke: #fff; stroke-width: 1; paint-order: stroke; }
.zips path { fill-opacity: .84; stroke: #5f5f66; stroke-width: 1px; vector-effect: non-scaling-stroke; }
.under { opacity: .45; }
.map .attrib { font-family: "Liberation Sans", sans-serif; font-size: 16.5px; fill: #555; }

.heat { display: grid; grid-template-columns: 160px 256px 254px 256px 254px 256px; grid-template-rows: 85px 45px 46px 48px 46px 47px; margin-left: 6px; font-size: 24px; }
.heat span { border-color: #c8c8c8; border-style: solid; border-width: 0; }
.heat .h { text-align: center; font-weight: 500; line-height: 134px; border-bottom-width: 2px; font-size: 23.8px; }
.heat .r0 { font-weight: 500; padding-left: 12px; text-align: left; line-height: 49px; font-size: 23.8px; }
.heat .v { text-align: right; padding-right: 9px; line-height: 46px; letter-spacing: .35px; font-weight: 370; }
.heat .last { border-bottom-width: 2px; }

.tabs { height: 60px; display: flex; background: #efefef; color: #111; line-height: 59px; letter-spacing: -.35px; }
.tabs a { border-right: 2px solid #dcdcdc; padding-left: 12px; white-space: nowrap; }
.tabs .active { background: #fff; color: #000; font-weight: 700; display: flex; align-items: center; gap: 8px; padding-left: 15px; letter-spacing: -.45px; }
.tools { margin-left: auto; }
```
FILE: charts.js
```js
const el = id => document.getElementById(id);
const text = (cls, x, y, s, len, anchor = 'middle', rot = false) =>
  `<text class="${cls}" text-anchor="${anchor}" textLength="${len}" ` +
  (rot ? `transform="translate(${x} ${y}) rotate(-90)"` : `x="${x}" y="${y}"`) + `>${s}</text>`;

/* Calendar */
const days = [
  ['Week 42', '12w#a982a8', '13w#9b6f97', '14w#a67da3', '15k#b08cae', '16w#ac86aa', '17w#ae89ac', '18w#91658d'],
  ['Week 40', '', '', '', '1w#986b94', '2k#bf9fbd', '3k#bc9aba', '4k#c8aec8'],
  ['Week 41', '5k#f0f0f0', '6w#a67da3', '7w#a77ea4', '8w#a0769c', '9k#b08cae', '10w#a1769e', '11k#ccb4cb'],
  ['Week 43', '19k#bb98b8', '20w#aa82a8', '21k#b38fb0', '22w#a1779d', '23k#b48fb1', '24w#aa83a8', '25k#dbc8da'],
  ['Week 44', '26w#7c4d79', '27k#bc99b9', '28w#a67da3', '29w#a57aa1', '30w#a67ba2', '31w#976a93', '']
];
el('cal').innerHTML = days.map(r => '<div class="cal-row">' + r.map((c, i) => {
  if (!i || !c) return `<span>${c}</span>`;
  const m = c.match(/(\d+)(\w)(#.*)/);
  return `<span class="${m[2]}" style="background:${m[3]}">${m[1]}</span>`;
}).join('') + '</div>').join('');

/* Daily average price */
let s = text('axis-dark', 1296, 296, 'Date', 53);
[[358, 367.5, '600K', 57.5], [500, 509.5, '400K', 57.5], [640, 650, '200K', 57.5], [782, 774, '0K', 28.5]].forEach(([g, b, t, l]) => {
  s += `<path d="M790 ${g + 1}H800M801 ${g}H1790" stroke="#f0f0f0" stroke-width="2"/>` + text('axis', 786, b, t, l, 'end');
});
s += '<path d="M800.5 307V782" stroke="#ececec"/>' + text('axis-dark', 708, 542, 'Avg. Price', 111, 'middle', true);
for (let i = 0; i < 30; i++) {
  s += `<path d="M${831 + i * 32.03} 785V790" stroke="#e6e6e6"/>` +
    text('axis', 854 + i * 32.03, 919, '2014-10-' + String(i + 2).padStart(2, '0'), 128, 'start', true);
}
const line = [570, 713, 704, 756, 904, 619, 618, 600, 661, 597, 767, 637, 576, 621, 664, 652, 655, 541, 699, 638, 681, 600, 684, 649, 820, 458, 702, 627, 613, 610, 560];
s += `<polyline fill="none" stroke="#93208f" stroke-width="6" stroke-linejoin="round" stroke-linecap="round" points="${line.map((v, i) => (817 + i * 31.95).toFixed(1) + ',' + (80 + v / 1.823).toFixed(1)).join(' ')}"/>`;
el('line').innerHTML = s;

/* Histograms */
const bars = (edges, tops, base) => tops.map((t, i) => {
  const x = edges[i], w = edges[i + 1] - x;
  return t === null ? '' : `<rect x="${x}" y="${t}" width="${w}" height="${base - t}" fill="#9a7893" stroke="#d2d2d2" stroke-width="2"/>`;
}).join('');
const freq = (x, y) => text('name', x, y, 'Frequency', 115, 'middle', true);

const price = [1213.5, 1193.5, 1147.5, 1079.5, 1053.5, 1034, 1040, 1089.5, 1037.5, 1067.5, 1093.5, 1098, 1121.5, 1127.5, 1149.5, 1167.5, 1164, 1181.5, 1145.5, 1180, 1178, 1205.5, 1203.5, 1207.5, 1215.5, 1211.5, 1215.5, 1224, 1218, 1220.5, 1218, 1224, 1222, 1224, 1224, 1222, 1222, 1218, 1224];
s = bars(price.concat(0).map((_, i) => 200 + i * 30.8), price, 1229.5);
[[150, 1052, 42], [100, 1104, 42], [50, 1172, 28], [0, 1222, 14]].forEach(([t, y, l]) => s += text('tick', 125.5, y, t, l, 'end'));
for (let i = 1; i <= 15; i++) s += text('tick', 194 + (i - 1) * 86.8, 1270, i + '00K', i > 9 ? 72 : 57.5);
el('price').innerHTML = s + freq(62, 1124.5) + text('name', 800, 1318, 'Price (bin)', 114);

s = '<path d="M978 1647.5H1119M1257 1647.5H1399" stroke="#d4d4d4" stroke-width="2"/>' +
  bars([140.5, 280.3, 420, 559.7, 698.5, 838, 978], [1644, 1498, 1452, 1458, 1604, 1644], 1647.6);
[[600, 1470, 42], [400, 1530, 42], [200, 1594, 42], [0, 1640, 14]].forEach(([t, y, l]) => s += text('tick', 125.5, y, t, l, 'end'));
[162, 228, 314, 402, 488.5, 575.6, 663.7, 750, 838, 924, 1012.5, 1100, 1186, 1274, 1360, 1438].forEach((x, i) => s += text('tick', x, 1688, (i / 2).toFixed(1), 35));
el('bath').innerHTML = s + freq(62, 1542) + text('name', 800, 1736, 'Bathrooms (bin)', 183);

s = '<path d="M1608 1647.5H2853M2541 1646H2853" stroke="#d4d4d4" stroke-width="2"/>' +
  bars([1764, 1918, 2073.6, 2230, 2385.6, 2540.5], [1642, 1590, 1452, 1510, 1618], 1647.6);
[[800, 1470], [600, 1516], [400, 1564], [200, 1610]].forEach(([t, y]) => s += text('tick', 1593, y, t, 42, 'end'));
[1617, 1765, 1924, 2082, 2239.5, 2397, 2555, 2715.5, 2873].forEach((x, i) => s += text('tick', x, 1688, i, 13.5));
el('bed').innerHTML = s + freq(1516.5, 1542) + text('name', 2261, 1736, 'Bedrooms (bin)', 172);

/* Heatmap */
const heads = ['View', 'Poor- Worn out', 'Fair- Badly worn', 'Average', 'Good', 'Very Good'];
const rows = [
  ['Excellent', '', '', '954,125w#835583', '1,029,125w#7b4d78', '879,898w#8c608c'],
  ['Good', '', '308,130k#dbabcb', '823,196w#946791', '695,554w#ac759d', '895,000w#8b5e8b'],
  ['Average', '', '', '756,606w#9e6e98', '614,605w#b87fa5', '692,246w#ac759d'],
  ['Fair', '', '', '710,980w#a9739b', '715,929w#a7729b', '653,525w#b17aa0'],
  ['No View', '125,000k#ebc8e4', '346,438k#d6a6c7', '480,561k#c891b6', '445,792k#cb97ba', '504,940k#c58db3']
];
el('heat').innerHTML = heads.map((h, i) => `<span class="h ${i ? '' : 'r0'}" ${i ? '' : 'style="line-height:134px"'}>${h}</span>`).join('') +
  rows.map((r, j) => r.map((c, i) => {
    const last = j === 4 ? ' last' : '';
    if (!i) return `<span class="r0${last}">${c}</span>`;
    if (!c) return `<span class="${last}"></span>`;
    const m = c.match(/([\d,]+)(\w)(#.*)/);
    return `<span class="v ${m[2]}${last}" style="background:${m[3]}">${m[1]}</span>`;
  }).join('')).join('');

/* Map labels and city dots */
const labels = [
  ['Quilcene', 2004.6, 246, 92.5], ['Edmonds', 2204, 253, 98], ['Silverdale', 2078, 344, 107],
  ['Seattle', 2213, 365, 118, 35], ['Renton', 2287, 451.7, 74], ['Kent', 2291, 510.7, 47], ['Union', 1929, 526.7, 60],
  ['Tacoma', 2173, 583.7, 110, 33], ['Shelton', 1918, 611, 81], ['Olympia', 1983, 703, 120, 33], ['Spanaway', 2179, 681.7, 109],
  ['Carbonado', 2329, 692, 114], ['Yelm', 2134.6, 775, 51], ['Eatonville', 2244, 818.7, 106], ['Grand Mound', 1923.6, 857.7, 142.5],
  ['Elbe', 2306, 879, 45], ['Centralia', 1969, 905, 95], ['Monroe', 2377, 225.7, 82], ['Index', 2560, 247, 57], ['Duvall', 2380, 292, 64],
  ['Skykomish', 2610, 314, 113], ['Lea', 2882, 382, 34], ['Snoqualmie', 2415, 422.7, 124], ['Hobart', 2382, 491.7, 72], ['Enumclaw', 2355, 617.7, 109]
];
const parks = [['Olympic', 1921.6, 318.7, 84], ['National Forest', 1884.6, 343.3, 158], ['k', 1806, 330, 12], ['Oka', 2882, 224, 37],
  ['We', 2880, 248.7, 32], ['Natio', 2857.6, 272.5, 54], ['Mount Rainier', 2455, 867, 144], ['National Park', 2459, 891, 137]];
const dots = [[2050.7, 262], [2180.7, 204], [2252.9, 270], [2130.7, 361], [2271.8, 393.7, 4.5], [2323.9, 469], [1958.9, 544], [1958.9, 628],
  [2227.9, 610, 4.2], [2042.9, 730, 4.2], [2233.9, 698], [2160, 792], [2296.8, 835], [1994.6, 874], [2327.9, 897], [2417.8, 242.7], [2587.9, 262.7],
  [2666.8, 331], [2412, 311], [2477, 440], [2418, 508], [2409.8, 634], [2385.8, 709], [2314, 528]];
el('places').innerHTML =
  dots.map(([x, y, r]) => `<circle cx="${x}" cy="${y}" r="${r || 3.3}"/>`).join('') +
  labels.map(([t, x, y, l, f]) => `<text x="${x}" y="${y}" textLength="${l}" lengthAdjust="spacingAndGlyphs" font-size="${f || 23.5}">${t}</text>`).join('') +
  parks.map(([t, x, y, l]) => `<text class="park" x="${x}" y="${y}" textLength="${l}" lengthAdjust="spacingAndGlyphs" font-size="23">${t}</text>`).join('');
```
